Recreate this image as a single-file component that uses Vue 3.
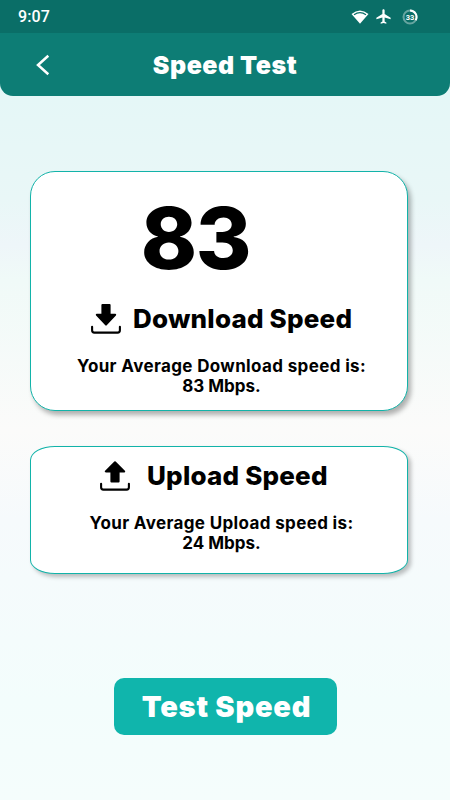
<template>
  <main class="screen">
    <div class="status-bar">
      <span class="clock">9:07</span>
      <div class="status-icons">
        <svg class="wifi" viewBox="0 0 18 14">
          <path d="M.5 4.1Q9-2.9 17.5 4.1L9 13.7Z" fill="#fff" />
          <path d="M3 4.7Q9 .4 15 4.7" fill="none" stroke="#0a6e67" stroke-width="1.2" />
        </svg>
        <svg class="plane" viewBox="2 2 20 20">
          <path
            d="M21.5 15.5v-2L13.5 8.8V3.8C13.5 2.9 12.8 2.2 12 2.2s-1.5.7-1.5 1.6v5L2.5 13.5v2l8-2.3v5.3l-2.3 1.6v1.6l3.8-.9 3.8.9v-1.6l-2.3-1.6v-5.3z"
            fill="#fff"
          />
        </svg>
        <svg class="battery" viewBox="0 0 16 16">
          <circle cx="8" cy="8" r="6.5" fill="none" stroke="#fff" stroke-opacity=".38" stroke-width="2" />
          <path d="M8 1.5A6.5 6.5 0 0 1 13.6 11.3" fill="none" stroke="#fff" stroke-width="2" />
          <text x="8" y="10.6" text-anchor="middle" class="battery-level">33</text>
        </svg>
      </div>
    </div>

    <header class="app-bar">
      <button class="back" type="button" aria-label="Back">
        <svg viewBox="0 0 14 22">
          <path d="M12.3 1.8L2 11l10.3 9.2" fill="none" stroke="#fff" stroke-width="2.5" />
        </svg>
      </button>
      <h1 class="title">Speed Test</h1>
    </header>

    <section v-for="card in cards" :key="card.name" class="card" :class="card.name">
      <div v-if="card.name === 'download'" class="reading">{{ card.speed }}</div>
      <div class="card-heading">
        <svg class="card-icon" viewBox="0 0 30 30">
          <path
            :d="card.arrow"
            fill="#000"
            stroke="#000"
            stroke-width="2"
            stroke-linejoin="round"
          />
          <path
            d="M1.1 22.8V26.3Q1.1 28.6 3.4 28.6H26.6Q28.9 28.6 28.9 26.3V22.8"
            fill="none"
            stroke="#000"
            stroke-width="2.1"
            stroke-linecap="round"
          />
        </svg>
        <h2>{{ card.title }}</h2>
      </div>
      <p class="average">
        <span class="sentence">Your Average {{ card.label }} speed is:</span><br />
        <span>{{ card.speed }} Mbps.</span>
      </p>
    </section>

    <button class="test-button" type="button">Test Speed</button>
  </main>
</template>

<script setup>
const cards = [
  {
    name: "download",
    label: "Download",
    title: "Download Speed",
    speed: 83,
    arrow: "M11.4 1H18.6V10.8H24.2L15 20.6L5.8 10.8H11.4Z",
  },
  {
    name: "upload",
    label: "Upload",
    title: "Upload Speed",
    speed: 24,
    arrow: "M11.4 20.6H18.6V10.4H24.2L15 1.2L5.8 10.4H11.4Z",
  },
];
</script>

<style>
body {
  margin: 0;
}
</style>

<style scoped>
.screen {
  box-sizing: border-box;
  display: flex;
  flex-direction: column;
  height: 800px;
  overflow: hidden;
  background: linear-gradient(#e5f7f7 96px, #e9f7f7 200px, #eef6f9 245px, #f0faf8 280px, #fbfbfa 430px, #f6fafc 520px, #f3fdfc 700px, #f5fdfc);
  font-family: Inter, "Open Sans", sans-serif;
  color: #000;
}

h1,
h2,
p {
  margin: 0;
}

button {
  padding: 0;
  border: 0;
  font-family: inherit;
  color: #fff;
}

.status-bar {
  box-sizing: border-box;
  display: flex;
  flex: none;
  align-items: center;
  justify-content: space-between;
  height: 33px;
  padding: 0 32px 0 18px;
  background: #0a6e67;
  color: #fff;
}

.clock {
  font: 500 16px/33px Roboto, sans-serif;
  letter-spacing: 0.1px;
}

.status-icons {
  display: flex;
  align-items: center;
}

.wifi {
  width: 18px;
  height: 14px;
}

.plane {
  width: 15px;
  height: 15px;
  margin-left: 7px;
}

.battery {
  width: 16px;
  height: 16px;
  margin-left: 11px;
}

.battery-level {
  font: 700 7.5px Roboto, sans-serif;
  fill: #fff;
}

.app-bar {
  display: grid;
  flex: none;
  grid-template-columns: 87px 1fr 87px;
  align-items: center;
  height: 63px;
  border-radius: 0 0 13px 13px;
  background: #0d7d75;
}

.back {
  display: flex;
  padding-left: 36px;
  background: transparent;
}

.back svg {
  width: 14px;
  height: 22px;
}

.title {
  font-size: 25px;
  font-weight: 900;
  line-height: 30px;
  letter-spacing: 0.5px;
  text-align: center;
  color: #fff;
}

.card {
  box-sizing: border-box;
  flex: none;
  width: 378px;
  margin-left: 30px;
  border: 1.5px solid #12b3a9;
  background: #fff;
}

.download {
  height: 240px;
  margin-top: 75px;
  border-radius: 25px;
  box-shadow: 3px 4px 5px rgb(0 0 0 / 30%);
}

.upload {
  height: 128px;
  margin-top: 35px;
  padding-top: 12px;
  border-radius: 25px / 14px;
  box-shadow: 3px 3px 4px rgb(0 0 0 / 25%);
}

.reading {
  height: 130px;
  padding-right: 47px;
  font-size: 85px;
  font-weight: 800;
  line-height: 134px;
  letter-spacing: -1.5px;
  text-align: center;
}

.card-heading {
  display: flex;
  align-items: center;
  height: 34px;
  padding-left: 60px;
}

.card-icon {
  width: 30px;
  height: 30px;
}

.card-heading h2 {
  margin-left: 12px;
  font-size: 26px;
  font-weight: 800;
  line-height: 34px;
  letter-spacing: 0.2px;
  white-space: nowrap;
}

.upload .card-heading {
  padding-left: 69px;
}

.upload .card-heading h2 {
  margin-left: 17px;
}

.average {
  margin-top: 20px;
  padding-left: 5px;
  font-size: 17px;
  font-weight: 700;
  line-height: 20px;
  text-align: center;
  white-space: nowrap;
}

.sentence {
  letter-spacing: 0.36px;
}

.test-button {
  flex: none;
  align-self: center;
  width: 223px;
  height: 57px;
  margin-top: 104px;
  padding-left: 3px;
  border-radius: 10px;
  background: #10b5ac;
  font-size: 29px;
  font-weight: 900;
  letter-spacing: 0.8px;
}
</style>
